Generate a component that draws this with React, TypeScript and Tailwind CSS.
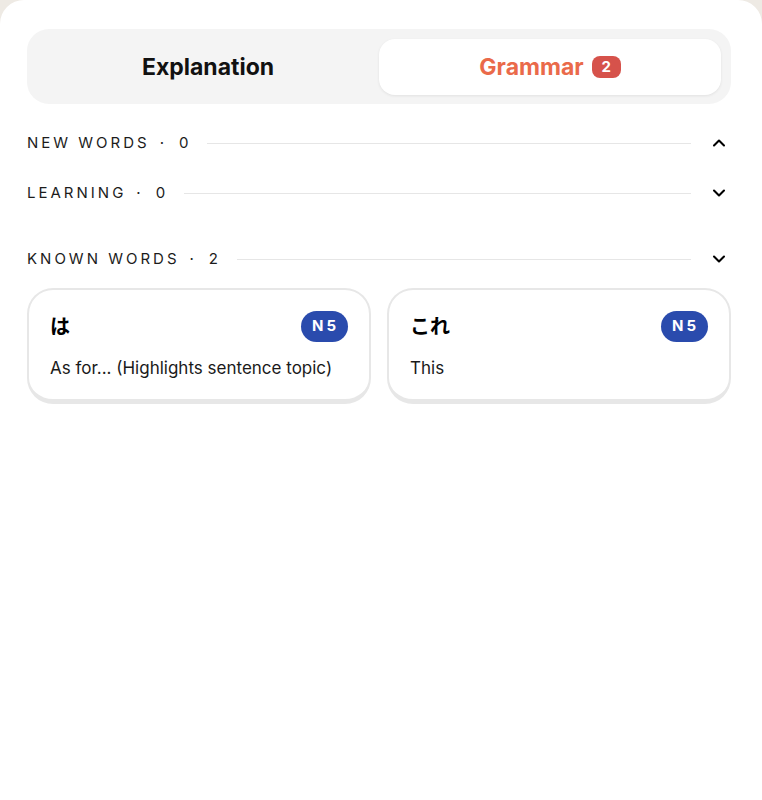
import React from "react";
import { ChevronDown, ChevronUp } from "lucide-react";

const font = { fontFamily: '"Inter", "Noto Sans CJK JP", sans-serif' };

type Word = { jp: string; meaning: string; level: string };

const knownWords: Word[] = [
  { jp: "は", meaning: "As for... (Highlights sentence topic)", level: "N5" },
  { jp: "これ", meaning: "This", level: "N5" },
];

function SectionRow({ label, count, open, className }: { label: string; count: number; open?: boolean; className?: string }) {
  return (
    <div className={`flex items-center h-[24px] ${className ?? ""}`}>
      <span className="text-[15px] font-normal tracking-[0.2em] text-[#1c1c1c] whitespace-nowrap">
        {label}
        <span className="ml-[10px] mr-[12px]">·</span>
        {count}
      </span>
      <div className="flex-1 h-px bg-[#e6e6e6] ml-[16px] mr-[16px]" />
      <div className="w-[24px] flex justify-center text-black">
        {open ? <ChevronUp size={20} strokeWidth={2.5} /> : <ChevronDown size={20} strokeWidth={2.5} />}
      </div>
    </div>
  );
}

function WordCard({ word }: { word: Word }) {
  return (
    <div className="rounded-[26px] border-2 border-b-[5px] border-[#e7e7e7] bg-white px-[21px] pt-[21px] pb-[19px]">
      <div className="flex items-center justify-between h-[31px]">
        <span className="text-[20px] font-bold text-black">{word.jp}</span>
        <span className="h-[31px] pl-[11px] pr-[9px] rounded-full bg-[#2a4bad] text-white text-[15px] font-bold tracking-[0.2em] flex items-center">
          {word.level}
        </span>
      </div>
      <p className="mt-[14px] text-[17px] leading-[24px] text-[#1a1a1a]">{word.meaning}</p>
    </div>
  );
}

export default function App() {
  return (
    <div className="h-[800px] bg-[#eeeae4]" style={font}>
      <div className="h-full bg-white rounded-t-[24px] pl-[27px] pr-[31px] pt-[29px]">
        {/* tabs */}
        <div className="flex h-[75px] bg-[#f4f4f4] rounded-[22px] p-[10px] pb-[9px]">
          <div className="flex-1 flex items-center justify-center text-[23px] font-bold text-[#111]">
            Explanation
          </div>
          <div className="flex-1 flex items-center justify-center gap-[8px] bg-white rounded-[16px] shadow-[0_1px_3px_rgba(0,0,0,0.08)]">
            <span className="text-[23px] font-bold text-[#ea6a4a]">Grammar</span>
            <span className="h-[22px] min-w-[29px] rounded-[8px] bg-[#d6524b] text-white text-[15px] font-bold flex items-center justify-center">
              2
            </span>
          </div>
        </div>

        <SectionRow label="NEW WORDS" count={0} open className="mt-[27px]" />
        <SectionRow label="LEARNING" count={0} className="mt-[26px]" />
        <SectionRow label="KNOWN WORDS" count={2} className="mt-[42px]" />

        <div className="grid grid-cols-2 gap-[16px] mt-[17px]">
          {knownWords.map((w, i) => (
            <WordCard key={i} word={w} />
          ))}
        </div>
      </div>
    </div>
  );
}
